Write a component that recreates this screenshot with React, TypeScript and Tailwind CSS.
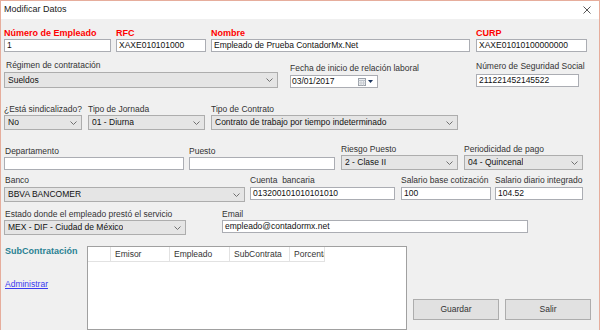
import React from 'react';

const FONT = "font-['Liberation_Sans',Arial,sans-serif]";

const Label = ({ children, className = '' }: { children: React.ReactNode; className?: string }) => (
  <div className={`h-[10px] leading-[10px] text-[8.5px] text-[#333] whitespace-nowrap ${className}`}>{children}</div>
);

const RedLabel = ({ children }: { children: React.ReactNode }) => (
  <div className="h-[10px] leading-[10px] text-[9px] font-bold text-[#f00] whitespace-nowrap">{children}</div>
);

const TextBox = ({ value = '', className = '' }: { value?: string; className?: string }) => (
  <div className={`h-[13px] bg-white border border-[#abadb3] pl-[2px] text-[8.5px] leading-[11px] text-[#111] whitespace-nowrap overflow-hidden ${className}`}>{value}</div>
);

const Chevron = () => (
  <svg width="7" height="4" viewBox="0 0 7 4" className="shrink-0">
    <polyline points="0.5,0.5 3.5,3.5 6.5,0.5" fill="none" stroke="#707070" strokeWidth="1" />
  </svg>
);

const Combo = ({ value, className = '', tall = false }: { value: string; className?: string; tall?: boolean }) => (
  <div className={`${tall ? 'h-[16px]' : 'h-[15px]'} bg-[#e5e5e5] border border-[#adadad] flex items-center justify-between pl-[3px] pr-[4px] ${className}`}>
    <span className="text-[8.5px] leading-[11px] text-[#111] whitespace-nowrap overflow-hidden">{value}</span>
    <Chevron />
  </div>
);

const DateBox = () => (
  <div className="mt-[2px] h-[13px] bg-white border border-[#abadb3] flex items-center justify-between pl-[1px] pr-[4px]">
    <span className="text-[8.5px] leading-[11px] text-[#111]">03/01/2017</span>
    <div className="flex items-center gap-[2px]">
      <svg width="8" height="8" viewBox="0 0 8 8">
        <rect x="0.5" y="0.5" width="7" height="7" fill="#eef0f2" stroke="#9aa0a8" />
        <line x1="0.5" y1="2.5" x2="7.5" y2="2.5" stroke="#b8bec6" />
        <line x1="0.5" y1="5" x2="7.5" y2="5" stroke="#c8ccd2" />
        <line x1="3" y1="2.5" x2="3" y2="7.5" stroke="#c8ccd2" />
        <line x1="5.5" y1="2.5" x2="5.5" y2="7.5" stroke="#c8ccd2" />
      </svg>
      <svg width="5" height="3" viewBox="0 0 5 3">
        <polygon points="0,0 5,0 2.5,3" fill="#1c355e" />
      </svg>
    </div>
  </div>
);

const HeaderCell = ({ children, w }: { children?: React.ReactNode; w: string }) => (
  <div className={`${w} h-[15px] border-r border-b border-[#e2e2e2] bg-white pl-[4px] text-[8.5px] leading-[14px] text-[#333] whitespace-nowrap overflow-hidden`}>
    {children}
  </div>
);

const WinButton = ({ label }: { label: string }) => (
  <button className="w-[86px] h-[21px] bg-[#e1e1e1] border border-[#adadad] text-[8.5px] text-[#333] flex items-center justify-center">
    {label}
  </button>
);

export default function App() {
  return (
    <div className={`w-[600px] h-[330px] overflow-hidden bg-[#f0f0f0] border-t border-x border-[#e6ad9c] flex flex-col ${FONT}`}>
      {/* title bar */}
      <div className="h-[18px] shrink-0 bg-white flex items-center justify-between pl-[3px] pr-[8px]">
        <span className="text-[9px] text-[#1a1a1a]">Modificar Datos</span>
        <svg width="8" height="8" viewBox="0 0 8 8">
          <line x1="0.5" y1="0.5" x2="7.5" y2="7.5" stroke="#444" strokeWidth="0.9" />
          <line x1="7.5" y1="0.5" x2="0.5" y2="7.5" stroke="#444" strokeWidth="0.9" />
        </svg>
      </div>

      <div className="flex flex-col pl-[3px]">
        {/* row 1 */}
        <div className="flex items-start mt-[9px]">
          <div className="w-[107px] flex flex-col">
            <RedLabel>Número de Empleado</RedLabel>
            <TextBox value="1" className="mt-[1px]" />
          </div>
          <div className="w-[90px] ml-[5px] flex flex-col">
            <RedLabel>RFC</RedLabel>
            <TextBox value="XAXE010101000" className="mt-[1px]" />
          </div>
          <div className="w-[259px] ml-[5px] flex flex-col">
            <RedLabel>Nombre</RedLabel>
            <TextBox value="Empleado de Prueba ContadorMx.Net" className="mt-[1px]" />
          </div>
          <div className="w-[111px] ml-[6px] flex flex-col">
            <RedLabel>CURP</RedLabel>
            <TextBox value="XAXE01010100000000" className="mt-[1px]" />
          </div>
        </div>

        {/* row 2 */}
        <div className="flex items-start mt-[8px]">
          <div className="w-[274px] flex flex-col">
            <Label className="pl-[2px]">Régimen de contratación</Label>
            <Combo value="Sueldos" tall className="mt-[2px]" />
          </div>
          <div className="w-[88px] ml-[12px] mt-[3px] flex flex-col">
            <Label>Fecha de inicio de relación laboral</Label>
            <DateBox />
          </div>
          <div className="w-[103px] ml-[98px] mt-[1px] flex flex-col">
            <Label>Número de Seguridad Social</Label>
            <TextBox value="211221452145522" className="mt-[3px]" />
          </div>
        </div>

        {/* row 3 */}
        <div className="flex items-start mt-[16px]">
          <div className="w-[78px] flex flex-col">
            <Label>¿Está sindicalizado?</Label>
            <Combo value="No" className="mt-[1px]" />
          </div>
          <div className="w-[117px] ml-[6px] flex flex-col">
            <Label>Tipo de Jornada</Label>
            <Combo value="01 - Diurna" className="mt-[1px]" />
          </div>
          <div className="w-[247px] ml-[6px] flex flex-col">
            <Label>Tipo de Contrato</Label>
            <Combo value="Contrato de trabajo por tiempo indeterminado" className="mt-[1px]" />
          </div>
        </div>

        {/* row 4 */}
        <div className="flex items-start mt-[14px]">
          <div className="w-[180px] mt-[2px] flex flex-col">
            <Label className="pl-[1px]">Departamento</Label>
            <TextBox className="mt-[1px]" />
          </div>
          <div className="w-[146px] ml-[5px] mt-[2px] flex flex-col">
            <Label>Puesto</Label>
            <TextBox className="mt-[1px]" />
          </div>
          <div className="w-[117px] ml-[6px] flex flex-col">
            <Label>Riesgo Puesto</Label>
            <Combo value="2 - Clase II" className="mt-[1px]" />
          </div>
          <div className="w-[119px] ml-[6px] flex flex-col">
            <Label>Periodicidad de pago</Label>
            <Combo value="04 - Quincenal" className="mt-[1px]" />
          </div>
        </div>

        {/* row 5 */}
        <div className="flex items-start mt-[5px]">
          <div className="w-[241px] flex flex-col">
            <Label className="pl-[1px]">Banco</Label>
            <Combo value="BBVA BANCOMER" className="mt-[2px]" />
          </div>
          <div className="w-[145px] ml-[5px] flex flex-col">
            <Label>Cuenta&nbsp;&nbsp;bancaria</Label>
            <TextBox value="013200101010101010" className="mt-[2px]" />
          </div>
          <div className="w-[90px] ml-[6px] flex flex-col">
            <Label>Salario base cotización</Label>
            <TextBox value="100" className="mt-[2px]" />
          </div>
          <div className="w-[88px] ml-[4px] flex flex-col">
            <Label>Salario diario integrado</Label>
            <TextBox value="104.52" className="mt-[2px]" />
          </div>
        </div>

        {/* row 6 */}
        <div className="flex items-start mt-[7px]">
          <div className="w-[182px] flex flex-col">
            <Label className="pl-[1px]">Estado donde el empleado prestó el servicio</Label>
            <Combo value="MEX - DIF - Ciudad de México" className="mt-[1px]" />
          </div>
          <div className="w-[306px] ml-[36px] flex flex-col">
            <Label>Email</Label>
            <TextBox value="empleado@contadormx.net" className="mt-[1px]" />
          </div>
        </div>

        {/* row 7 */}
        <div className="flex items-start mt-[11px]">
          <div className="w-[83px] flex flex-col pl-[1px]">
            <div className="h-[10px] leading-[10px] text-[9px] font-bold text-[#2a8193] whitespace-nowrap">SubContratación</div>
            <a className="mt-[23px] h-[10px] leading-[10px] text-[8.5px] text-[#3a3af0] underline">Administrar</a>
          </div>
          <div className="w-[320px] h-[84px] bg-white border border-[#a0a0a0]">
            <div className="flex">
              <HeaderCell w="w-[23px]" />
              <HeaderCell w="w-[59px]">Emisor</HeaderCell>
              <HeaderCell w="w-[60px]">Empleado</HeaderCell>
              <HeaderCell w="w-[60px]">SubContrata</HeaderCell>
              <HeaderCell w="w-[35px]">Porcentaje</HeaderCell>
            </div>
          </div>
          <div className="flex gap-[6px] ml-[6px] mt-[53px]">
            <WinButton label="Guardar" />
            <WinButton label="Salir" />
          </div>
        </div>
      </div>
    </div>
  );
}
